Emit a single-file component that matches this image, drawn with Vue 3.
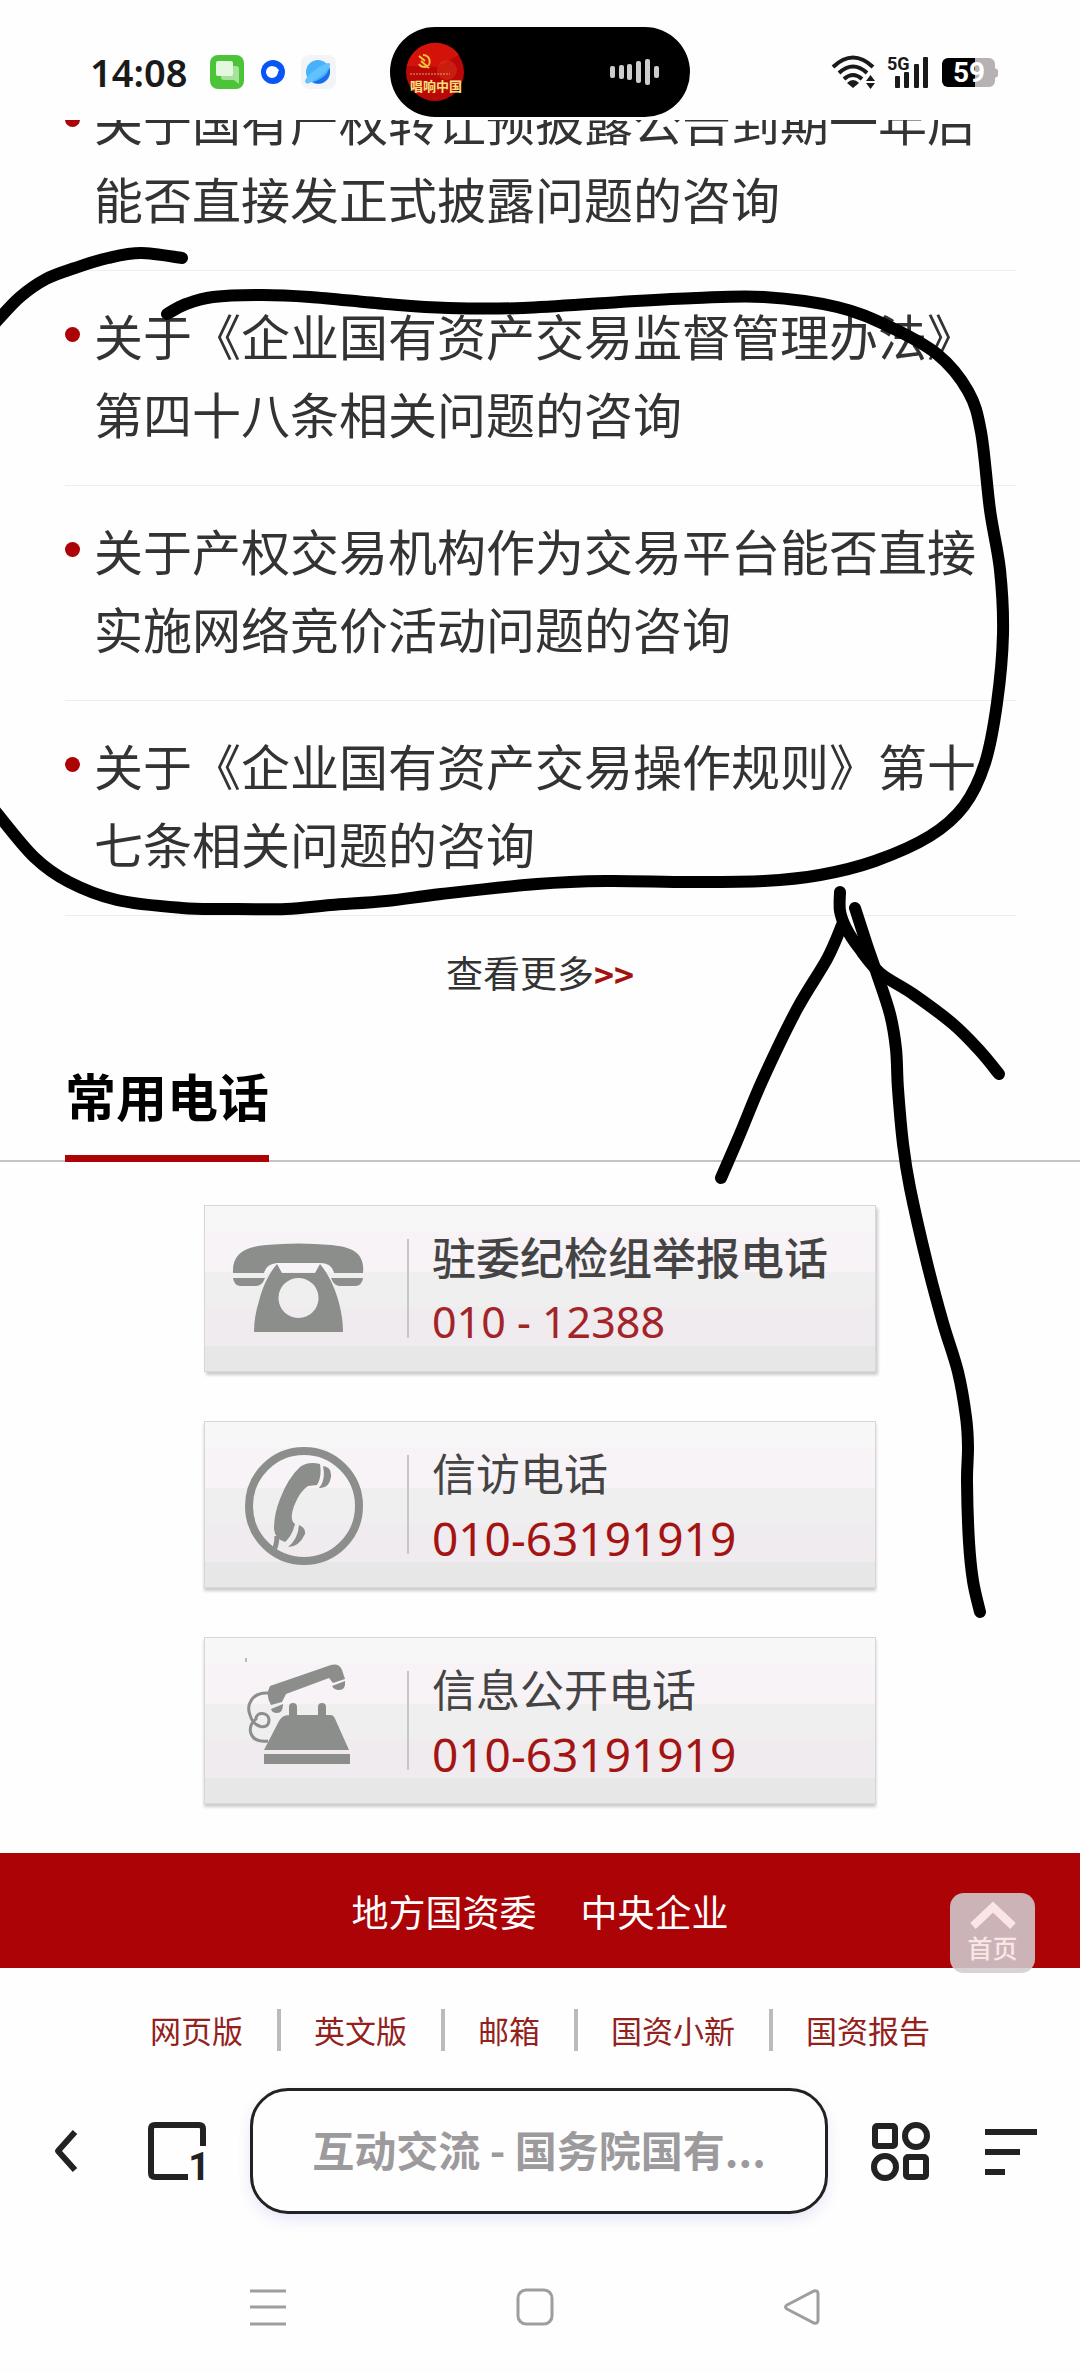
<script setup>
const questions = [
  '关于国有产权转让预披露公告到期一年后能否直接发正式披露问题的咨询',
  '关于《企业国有资产交易监督管理办法》第四十八条相关问题的咨询',
  '关于产权交易机构作为交易平台能否直接实施网络竞价活动问题的咨询',
  '关于《企业国有资产交易操作规则》第十七条相关问题的咨询',
]

const phones = [
  { icon: 'desk', name: '驻委纪检组举报电话', number: '010 - 12388' },
  { icon: 'round', name: '信访电话', number: '010-63191919' },
  { icon: 'cord', name: '信息公开电话', number: '010-63191919' },
]

const siteLinks = ['网页版', '英文版', '邮箱', '国资小新', '国资报告']

// freehand strokes drawn over the page
const strokes = [
  [[182, 258], [141, 253], [108, 258], [75, 268], [46, 279], [20, 297], [-4, 322]],
  [[-4, 812], [34, 857], [69, 882], [117, 900], [182, 908], [227, 909], [286, 909], [331, 905], [386, 901], [441, 894], [537, 884], [606, 881], [689, 882], [764, 881], [820, 875], [875, 861], [930, 836], [964, 806], [985, 763], [997, 703], [1003, 634], [1000, 570], [990, 510], [981, 432], [968, 391], [937, 354], [888, 326], [837, 307], [764, 297], [696, 298], [620, 302], [523, 308], [448, 308], [386, 304], [310, 297], [262, 295], [213, 297], [186, 304], [167, 314]],
  [[840, 892], [840, 911], [846, 928], [859, 948], [880, 973], [913, 994], [953, 1024], [980, 1051], [999, 1074]],
  [[842, 925], [827, 959], [797, 1009], [763, 1079], [740, 1134], [721, 1178]],
  [[855, 908], [867, 945], [877, 974], [890, 1014], [896, 1049], [898, 1089], [903, 1144], [910, 1188], [927, 1263], [943, 1323], [958, 1372], [966, 1417], [968, 1447], [967, 1482], [969, 1542], [973, 1581], [980, 1612]],
]

// Catmull-Rom points to a cubic bezier path
function smooth(pts) {
  let d = `M${pts[0][0]} ${pts[0][1]}`
  for (let i = 0; i < pts.length - 1; i++) {
    const p0 = pts[i - 1] || pts[i]
    const p1 = pts[i]
    const p2 = pts[i + 1]
    const p3 = pts[i + 2] || p2
    const c1 = [p1[0] + (p2[0] - p0[0]) / 6, p1[1] + (p2[1] - p0[1]) / 6]
    const c2 = [p2[0] - (p3[0] - p1[0]) / 6, p2[1] - (p3[1] - p1[1]) / 6]
    d += `C${c1[0]} ${c1[1]} ${c2[0]} ${c2[1]} ${p2[0]} ${p2[1]}`
  }
  return d
}
</script>

<template>
  <div class="screen">
    <!-- ステータスバー -->
    <header class="status">
      <div class="status-left">
        <span class="time">14:08</span>
        <svg class="app-icons" width="128" height="36" viewBox="0 0 128 36">
          <rect x="1" y="1" width="34" height="34" rx="8" fill="#4cc437" />
          <path d="M13 12h14a3 3 0 0 1 3 3v15l-5-4H15a3 3 0 0 1-3-3z" fill="#a5e39a" />
          <rect x="7" y="7" width="17" height="15" rx="2" fill="#e4f8e0" />
          <circle cx="64" cy="18" r="12" fill="#0a55f5" />
          <path d="M63 12a6 6 0 1 0 6 6l1-2-3-3z" fill="#fff" />
          <rect x="92" y="1" width="35" height="34" rx="8" fill="#f3f4f8" />
          <circle cx="109" cy="18" r="12" fill="#48b1fb" />
          <path d="M120 10c2 8-6 15-16 18 9 5 18-3 17-12z" fill="#1c6cec" />
          <path d="M97 29c-3-2 2-8 9-13s14-9 15-6-5 9-11 13-11 8-13 6z" fill="#62c2fd" />
        </svg>
      </div>
      <div class="island">
        <svg width="60" height="60" viewBox="0 0 60 60">
          <circle cx="30" cy="30" r="29" fill="#b90807" />
          <path d="M2 24a29 29 0 0 1 52-11L32 25z" fill="#d31209" />
          <circle cx="42" cy="28" r="10" fill="#e0401b" opacity=".4" />
          <path d="M14 14l6 5M16 19l8 7M18 13c8 0 9 11 2 12-3 0-5-1-6-3" fill="none" stroke="#f2c53d" stroke-width="2" />
          <path d="M5 32h40" stroke="#e7a052" stroke-dasharray="2 1" />
          <text x="5" y="49" class="cover-text">唱响中国</text>
        </svg>
        <svg width="50" height="28" viewBox="0 0 50 28" fill="#ccc">
          <rect x="0" y="8" width="5" height="12" rx="2" />
          <rect x="9" y="7" width="5" height="14" rx="2" />
          <rect x="17" y="6" width="5" height="16" rx="2" />
          <rect x="26" y="3" width="5" height="22" rx="2" />
          <rect x="35" y="1" width="5" height="26" rx="2" />
          <rect x="44" y="8" width="5" height="12" rx="2" />
        </svg>
      </div>
      <div class="status-right">
        <svg width="44" height="34" viewBox="0 0 44 34">
          <g fill="none" stroke="#1a1a1a" stroke-width="4">
            <path d="M1 12q20-19 40 0" />
            <path d="M7 18q14-13 28 0" />
            <path d="M12 24q9-8 18 0" />
          </g>
          <path d="M15 28q6-6 12 0l-6 5z" fill="#1a1a1a" />
          <path d="M34 26l4.500-6 4.500 6zM34 28h9l-4.500 6z" fill="#1a1a1a" />
        </svg>
        <svg width="44" height="34" viewBox="0 0 44 34" fill="#1a1a1a">
          <text x="0" y="15" class="net-text">5G</text>
          <rect x="8" y="21" width="5" height="12" rx="1" />
          <rect x="17" y="17" width="5" height="16" rx="1" />
          <rect x="27" y="9" width="5" height="24" rx="1" />
          <rect x="36" y="2" width="5" height="31" rx="1" />
        </svg>
        <svg width="56" height="34" viewBox="0 0 56 34">
          <path d="M33 3h14a6 6 0 0 1 6 6v4l3 2v6l-3 2v3a6 6 0 0 1-6 6H33z" fill="#b5b1b5" />
          <path d="M6 3h27v29H6a6 6 0 0 1-6-6V9a6 6 0 0 1 6-6z" fill="#000" />
          <text x="27" y="27" text-anchor="middle" class="battery-text">59</text>
        </svg>
      </div>
    </header>

    <main class="page">
      <ul class="list">
        <li v-for="q in questions" :key="q" class="item">
          <i class="dot"></i>
          <a href="#" class="item-link">{{ q }}</a>
        </li>
      </ul>
      <a href="#" class="more">查看更多<b class="more-arrow">&gt;&gt;</b></a>

      <div class="title-bar">
        <h2 class="title">常用电话</h2>
      </div>

      <div class="cards">
        <a v-for="(p, index) in phones" :key="p.name" href="#" class="card" :class="{ 'card-first': index === 0 }">
          <svg class="card-icon" width="202" height="165" viewBox="1 0 202 165">
            <g v-if="p.icon === 'desk'" fill="#8b8e8b">
              <path d="M29 67C28 48 40 41 62 39Q95 36 127 39C150 41 161 48 159 67H130Q128 57 116 57H73Q62 58 60 67z" />
              <path d="M29 72h32q-3 8-9 8H36q-6-1-7-8zM127 72h32q-1 7-7 8h-16q-6 0-9-8z" />
              <path fill-rule="evenodd" d="M73 58l5 9h33l5-9c7 8 15 23 19 39q4 15 4 29H50q0-15 5-31c4-16 11-29 18-37zM94 72a20 20 0 1 0 1 0z" />
            </g>
            <g v-else-if="p.icon === 'round'" fill="#8b8e8b">
              <circle cx="100" cy="84" r="55" fill="none" stroke="#8b8e8b" stroke-width="8" />
              <path d="M116 42Q104 39 96 45Q84 56 76 77Q70 92 70 107Q71 117 81 120Q88 114 91 102Q85 98 90 84Q96 69 104 64L113 63Q118 55 116 42z" />
              <path d="M119 44q9 1 8 11-2 12-12 11 7-8 4-22zM95 103q7 3 6 9-6 13-17 13 10-8 11-22z" />
              <path d="M73 114q0 10-5 18" fill="none" stroke="#8b8e8b" stroke-width="5" />
            </g>
            <g v-else fill="#8b8e8b">
              <path d="M42 20v4" stroke="#bbb" stroke-width="2" />
              <path d="M66 48L127 27Q135 25 138 32L141 41L129 45L125 40L82 56L78 64L67 67Q61 57 66 48z" />
              <path d="M128 48l13-5q1 9-6 9-5 0-7-4zM67 71l12-5q0 9-6 9-5 0-6-4z" />
              <path d="M85 79V69q0-4 4-4t4 4v8h21v-8q0-4 4-4t4 4v8h5q3 0 5 6l13 29H60l15-29q3-6 10-6zM60 116h86v10H60z" />
              <path d="M64 55C48 54 42 67 46 77C49 90 65 93 65 82C65 74 52 73 52 81C43 87 43 105 64 103" fill="none" stroke="#8b8e8b" stroke-width="3" />
            </g>
          </svg>
          <i class="card-line"></i>
          <span class="card-text">
            <span class="card-name">{{ p.name }}</span>
            <span class="card-number">{{ p.number }}</span>
          </span>
        </a>
      </div>

      <div class="red-bar">
        <a href="#">地方国资委</a>
        <a href="#">中央企业</a>
        <button type="button" class="to-top">
          <svg width="44" height="28" viewBox="0 0 44 28">
            <path d="M2 25L22 6l20 19" fill="none" stroke="#fbe6e6" stroke-width="8" />
          </svg>
          首页
        </button>
      </div>

      <nav class="links">
        <a v-for="l in siteLinks" :key="l" href="#" class="link">{{ l }}</a>
      </nav>
    </main>

    <!-- ブラウザのツールバー -->
    <div class="toolbar">
      <button type="button" class="tool" aria-label="后退">
        <svg width="30" height="58" viewBox="0 0 30 58">
          <path d="M23 10L6 29l17 19" fill="none" stroke="#222" stroke-width="6" stroke-linejoin="round" />
        </svg>
      </button>
      <button type="button" class="tool tabs" aria-label="标签页">
        <svg width="58" height="58" viewBox="0 0 58 58">
          <path d="M40 55H7q-4 0-4-4V7q0-4 4-4h44q4 0 4 4v17" fill="none" stroke="#222" stroke-width="6" />
          <text x="62" y="58" text-anchor="end" class="tab-count">1</text>
        </svg>
      </button>
      <input class="address" type="text" value="互动交流 - 国务院国有..." aria-label="地址栏" readonly>
      <button type="button" class="tool" aria-label="应用">
        <svg width="60" height="58" viewBox="0 0 60 58" fill="none" stroke="#222" stroke-width="6">
          <rect x="4" y="4" width="20" height="20" rx="2" />
          <circle cx="45" cy="14" r="11" />
          <circle cx="14" cy="45" r="11" />
          <rect x="35" y="35" width="20" height="20" rx="2" />
        </svg>
      </button>
      <button type="button" class="tool menu" aria-label="菜单">
        <svg width="52" height="58" viewBox="0 0 52 58" stroke="#222" stroke-width="6">
          <path d="M0 10h52M0 30h35M0 50h20" />
        </svg>
      </button>
    </div>

    <!-- ナビゲーションキー -->
    <div class="keys">
      <button type="button" class="key" aria-label="最近任务">
        <svg width="36" height="38" viewBox="0 0 36 38" stroke="#9e9e9e" stroke-width="3">
          <path d="M0 3h36M0 19h36M0 36h36" />
        </svg>
      </button>
      <button type="button" class="key" aria-label="主页">
        <svg width="38" height="38" viewBox="0 0 38 38" fill="none" stroke="#9e9e9e" stroke-width="3">
          <rect x="2" y="2" width="34" height="34" rx="8" />
        </svg>
      </button>
      <button type="button" class="key" aria-label="返回">
        <svg width="36" height="38" viewBox="0 0 36 38" fill="none" stroke="#9e9e9e" stroke-width="3">
          <path d="M3 17L30 3q4-1 4 3v26q0 4-4 3L3 21q-3-2 0-4z" />
        </svg>
      </button>
    </div>

    <svg class="ink" width="1080" height="1700" viewBox="0 0 1080 1700">
      <path v-for="(s, index) in strokes" :key="index" :d="smooth(s)" />
    </svg>
  </div>
</template>

<style>
body {
  margin: 0;
  background: #fefefe;
}
</style>

<style scoped>
.screen {
  position: relative;
  display: flex;
  flex-direction: column;
  min-height: 100vh;
  overflow: hidden;
  background: #fefefe;
  color: #333;
  font-family: "Noto Sans CJK SC", sans-serif;
}

a {
  color: inherit;
  text-decoration: none;
}

button {
  padding: 0;
  border: 0;
  background: none;
  font-family: inherit;
}

svg {
  display: block;
  flex: none;
  overflow: visible;
}

.status {
  display: grid;
  grid-template-columns: 1fr 300px 1fr;
  align-items: center;
  box-sizing: border-box;
  height: 120px;
  padding-top: 24px;
}

.status-left {
  display: flex;
  align-items: center;
  gap: 22px;
  padding-left: 90px;
}

.time {
  color: #1a1a1a;
  font: 600 38px/48px "Noto Sans", sans-serif;
}

.island {
  display: flex;
  align-items: center;
  justify-content: space-between;
  box-sizing: border-box;
  height: 90px;
  padding: 0 30px 0 15px;
  border-radius: 45px;
  background: #000;
}

.cover-text {
  fill: #f9e27d;
  font-size: 13px;
  font-weight: 700;
}

.status-right {
  display: flex;
  align-items: center;
  justify-content: flex-end;
  gap: 11px;
  padding-right: 82px;
}

.net-text {
  font: 700 18px Roboto, sans-serif;
}

.battery-text {
  fill: #fff;
  font: 700 28px Roboto, sans-serif;
}

.page {
  overflow: hidden;
}

/* 上端はスクロールで隠れている */
.list {
  margin: -64px 64px 0 65px;
  padding: 0;
  list-style: none;
}

.item {
  display: flex;
  gap: 14px;
  padding: 25px 0 33px;
  border-bottom: 1px solid #eee;
}

.dot {
  flex: none;
  width: 15px;
  height: 15px;
  margin-top: 31px;
  border-radius: 50%;
  background: #ab0306;
}

.item-link {
  font-size: 49px;
  line-height: 78px;
}

.more {
  display: block;
  padding: 29px 0 60px;
  font-size: 37px;
  line-height: 54px;
  text-align: center;
}

.more-arrow {
  color: #a3120c;
  font-size: 34px;
  line-height: 1;
}

.title-bar {
  padding: 0 65px;
  box-shadow: inset 0 -2px #c4c4c4;
}

.title {
  width: fit-content;
  margin: 0;
  padding-bottom: 24px;
  border-bottom: 7px solid #ab0306;
  color: #000;
  font-size: 51px;
  line-height: 72px;
}

.cards {
  display: flex;
  flex-direction: column;
  align-items: center;
  gap: 49px;
  padding: 43px 0 49px;
}

.card {
  display: flex;
  align-items: center;
  box-sizing: border-box;
  width: 90%;
  max-width: 672px;
  height: 167px;
  border: 1px solid #d9d5d9;
  background: linear-gradient(#f7f7f7 15%, #f7f3f7 15% 40%, #efefef 40% 61%, #efebef 61% 85%, #e7e7e7 85%);
  box-shadow: 0 3px 3px #cdcacd;
}

.card-first {
  box-shadow: 2px 3px 3px #cdcacd;
}

.card-line {
  width: 2px;
  height: 99px;
  background: #c6c6c6;
}

.card-text {
  display: flex;
  flex-direction: column;
  padding-left: 23px;
  line-height: 66px;
}

.card-name {
  color: #444;
  font-size: 44px;
}

.card-number {
  color: #a31413;
  font-family: "Noto Sans", sans-serif;
  font-size: 46px;
}

.card-first .card-name {
  font-weight: 500;
}

.card-first .card-number {
  color: #a32428;
  font-size: 43px;
}

.red-bar {
  position: relative;
  display: flex;
  align-items: center;
  justify-content: center;
  gap: 44px;
  height: 115px;
  background: #ab0306;
  color: #fff;
  font-size: 37px;
}

.to-top {
  position: absolute;
  top: 40px;
  right: 45px;
  display: flex;
  flex-direction: column;
  align-items: center;
  width: 85px;
  height: 80px;
  padding-top: 8px;
  border-radius: 14px;
  background: rgba(208, 204, 208, 0.88);
  color: #fbe6e6;
  font-size: 25px;
  font-weight: 500;
  line-height: 36px;
}

.links {
  display: flex;
  justify-content: center;
  padding: 41px 0 16px;
  color: #93211c;
  font-size: 31px;
  line-height: 42px;
}

.link + .link {
  margin-left: 34px;
  padding-left: 33px;
  border-left: 4px solid #bbb;
}

.toolbar {
  display: flex;
  align-items: center;
  padding: 21px 43px 0 52px;
}

.tabs {
  margin: 0 44px 0 66px;
}

.menu {
  margin-left: 54px;
}

.address {
  flex: 1;
  box-sizing: border-box;
  min-width: 0;
  height: 126px;
  margin-right: 43px;
  padding: 0 30px 5px;
  border: 3px solid #222;
  border-radius: 38px;
  background: #fefefe;
  box-shadow: 0 6px 14px rgba(90, 90, 220, 0.14);
  color: #9c9a9c;
  font: 700 42px "Noto Sans CJK SC", sans-serif;
  text-align: center;
  outline: none;
}

.tab-count {
  fill: #222;
  font: 700 38px Roboto, sans-serif;
}

.keys {
  display: grid;
  grid-template-columns: repeat(3, 1fr);
  padding: 74px 144px 40px 134px;
}

.key {
  display: flex;
  justify-content: center;
}

.ink {
  position: absolute;
  top: 0;
  left: 0;
  pointer-events: none;
}

.ink path {
  fill: none;
  stroke: #000;
  stroke-width: 12px;
  stroke-linecap: round;
  stroke-linejoin: round;
}
</style>
